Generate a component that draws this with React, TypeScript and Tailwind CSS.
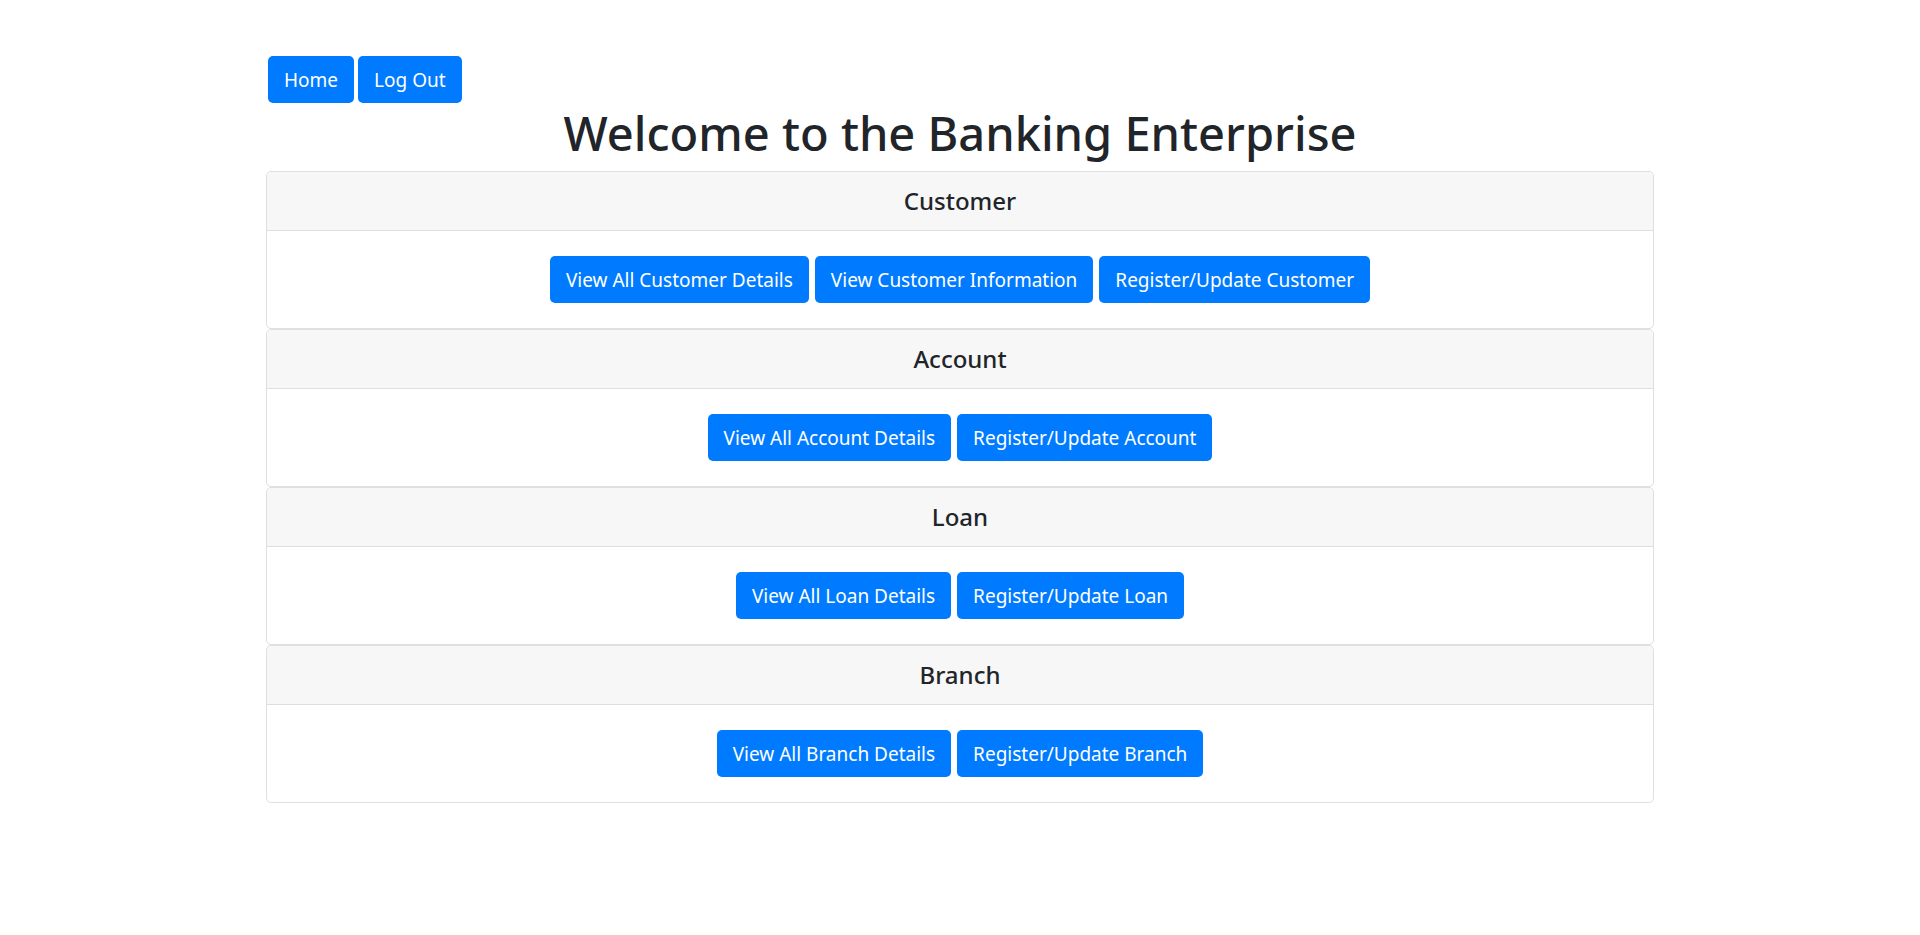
const sections = [
  {
    title: "Customer",
    actions: ["View All Customer Details", "View Customer Information", "Register/Update Customer"],
  },
  { title: "Account", actions: ["View All Account Details", "Register/Update Account"] },
  { title: "Loan", actions: ["View All Loan Details", "Register/Update Loan"] },
  { title: "Branch", actions: ["View All Branch Details", "Register/Update Branch"] },
];

const Btn = ({ label }: { label: string }) => (
  <button className="h-[47px] rounded-[5px] bg-[#007bff] px-[16px] text-[19px] leading-[30px] text-white">
    {label}
  </button>
);

export default function App() {
  return (
    <div className="min-h-screen bg-white font-['Noto_Sans',sans-serif] text-[#212529]">
      <div className="mx-auto w-[1388px] pt-[56px]">
        <div className="ml-[2px] flex gap-[4px]">
          <Btn label="Home" />
          <Btn label="Log Out" />
        </div>

        <h1 className="mb-[8px] text-center text-[47px] leading-[60px] font-medium">
          Welcome to the Banking Enterprise
        </h1>

        {sections.map((s) => (
          <div key={s.title} className="rounded-[5px] border border-[#dfdfdf]">
            <div className="rounded-t-[5px] border-b border-[#dfdfdf] bg-[#f7f7f7] py-[14px] text-center text-[24px] leading-[30px] font-medium">
              {s.title}
            </div>
            <div className="flex justify-center gap-[6px] p-[25px]">
              {s.actions.map((a) => (
                <Btn key={a} label={a} />
              ))}
            </div>
          </div>
        ))}
      </div>
    </div>
  );
}
